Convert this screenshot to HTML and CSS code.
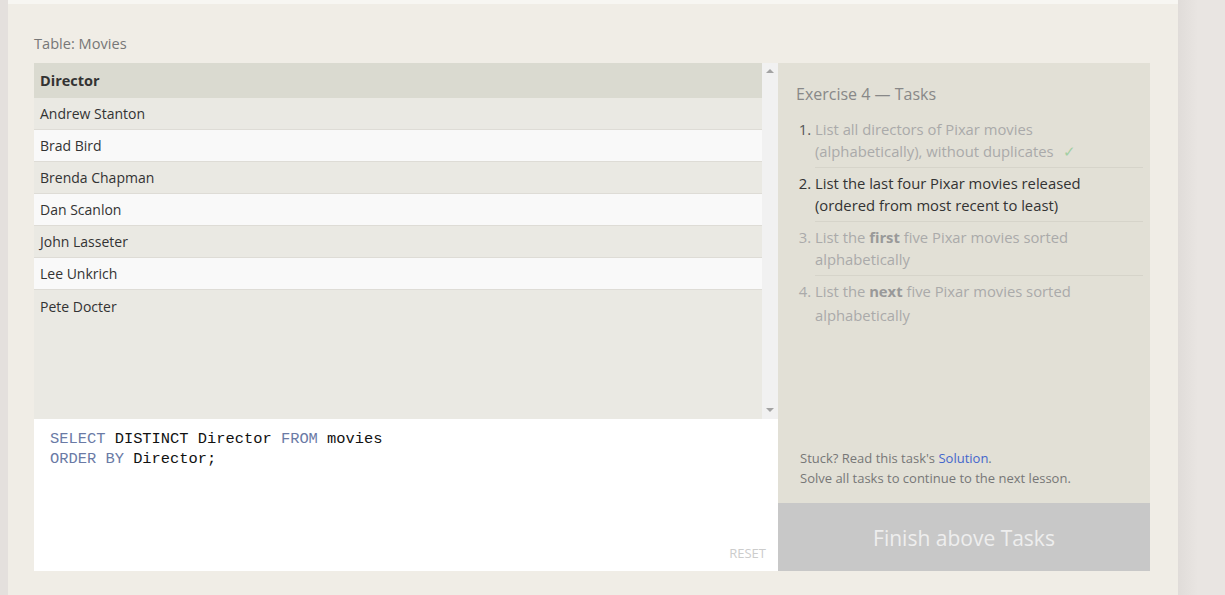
FILE: index.html
```html
<!DOCTYPE html>
<html>
<head>
<meta charset="utf-8">
<link rel="stylesheet" href="styles.css">
</head>
<body>
<div class="page">
  <div class="gutter"></div>
  <div class="card">
    <div class="table-title">Table: Movies</div>
    <div class="workspace">
      <div class="left">
        <div class="results">
          <div class="table-wrap">
            <div class="row head">Director</div>
            <div class="row odd">Andrew Stanton</div>
            <div class="row even">Brad Bird</div>
            <div class="row odd">Brenda Chapman</div>
            <div class="row even">Dan Scanlon</div>
            <div class="row odd">John Lasseter</div>
            <div class="row even">Lee Unkrich</div>
            <div class="row odd last">Pete Docter</div>
          </div>
          <div class="scrollbar">
            <span class="arrow up"></span>
            <span class="arrow down"></span>
          </div>
        </div>
        <div class="editor">
          <div class="code"><span class="kw">SELECT</span> DISTINCT Director <span class="kw">FROM</span> movies<br><span class="kw">ORDER BY</span> Director;</div>
          <div class="reset">RESET</div>
        </div>
      </div>
      <div class="right">
        <div class="tasks">
          <div class="tasks-title">Exercise 4 — Tasks</div>
          <ol class="task-list">
            <li class="done">List all directors of Pixar movies (alphabetically), without duplicates <span class="check">✓</span></li>
            <li class="active">List the last four Pixar movies released (ordered from most recent to least)</li>
            <li class="todo">List the <b>first</b> five Pixar movies sorted alphabetically</li>
            <li class="todo last">List the <b>next</b> five Pixar movies sorted alphabetically</li>
          </ol>
        </div>
        <div class="hint">
          <div>Stuck? Read this task's <a class="link">Solution</a>.</div>
          <div>Solve all tasks to continue to the next lesson.</div>
        </div>
        <div class="finish">Finish above Tasks</div>
      </div>
    </div>
  </div>
  <div class="outside"></div>
</div>
</body>
</html>
```

FILE: styles.css
```css
* { box-sizing: border-box; }
html, body { margin: 0; padding: 0; }
body {
  background: #e9e5e2;
  font-family: "Open Sans", "Noto Sans", sans-serif;
  height: 595px;
  overflow: hidden;
}
.page { display: flex; height: 595px; }
.gutter { width: 8px; background: #e4e0dd; flex: none; }
.card {
  width: 1170px;
  flex: none;
  background: #f0ede6;
  border-top: 4px solid #f7f6f2;
  padding: 28px 0 0 26px;
}
.outside {
  flex: 1;
  background: linear-gradient(to right, #e0dcd9, #e9e5e2 20px);
}
.table-title {
  color: #777;
  font-size: 14.6px;
  line-height: 22px;
  height: 31px;
}
.workspace {
  display: flex;
  width: 1116px;
  height: 508px;
}
.left {
  width: 744px;
  display: flex;
  flex-direction: column;
}
.results {
  height: 356px;
  display: flex;
  background: #eae9e3;
}
.table-wrap { flex: 1; }
.row {
  height: 32px;
  line-height: 31px;
  padding-left: 6px;
  font-size: 14px;
  color: #333;
  border-bottom: 1px solid #dedcd6;
}
.row.head {
  height: 35px;
  line-height: 35px;
  background: #dadad0;
  font-weight: 700;
  border-bottom: none;
  font-size: 14.5px;
}
.row.odd { background: #eae9e3; }
.row.even { background: #f9f9f9; }
.row.last { border-bottom: none; height: 33px; line-height: 33px; }
.scrollbar {
  width: 16px;
  background: #f1f1f1;
  display: flex;
  flex-direction: column;
  justify-content: space-between;
  align-items: center;
  padding: 6px 0 7px;
}
.arrow {
  width: 0; height: 0;
  border-left: 4px solid transparent;
  border-right: 4px solid transparent;
}
.arrow.up { border-bottom: 4px solid #a3a3a3; }
.arrow.down { border-top: 4px solid #a3a3a3; }
.editor {
  flex: 1;
  background: #fff;
  padding: 10px 12px 0 16px;
  display: flex;
  flex-direction: column;
  justify-content: space-between;
}
.code {
  font-family: "Liberation Mono", "DejaVu Sans Mono", monospace;
  font-size: 15.4px;
  line-height: 20px;
  color: #111;
}
.kw { color: #6a7aa5; }
.reset {
  align-self: flex-end;
  color: #ccc;
  font-size: 13px;
  line-height: 18px;
  margin-bottom: 9px;
}
.right {
  width: 372px;
  background: #e2e0d6;
  display: flex;
  flex-direction: column;
}
.tasks {
  flex: 1;
  padding: 20px 7px 0 18px;
}
.tasks-title {
  color: #888;
  font-size: 16px;
  line-height: 22px;
  margin-bottom: 9px;
}
.task-list {
  margin: 0;
  padding-left: 19px;
  font-size: 14.8px;
  line-height: 22px;
}
.task-list li {
  padding: 4px 46px 5px 0;
  border-bottom: 1px solid #d6d4ca;
}
.task-list li.last { border-bottom: none; line-height: 24px; padding-top: 3px; }
.done { color: #aaa; }
.done::marker { color: #555; }
.active { color: #333; }
.active::marker { color: #333; }
.todo { color: #aaa; }
.todo::marker { color: #aaa; }
.todo b { color: #999; }
.check { color: #a3cfa3; margin-left: 6px; }
.hint {
  padding: 0 0 15px 22px;
  font-size: 13px;
  line-height: 20px;
  color: #777;
}
.link { color: #4466cc; }
.finish {
  height: 68px;
  background: #c8c8c8;
  color: #eeeeee;
  font-size: 21px;
  padding-top: 1px;
  display: flex;
  align-items: center;
  justify-content: center;
}
```
